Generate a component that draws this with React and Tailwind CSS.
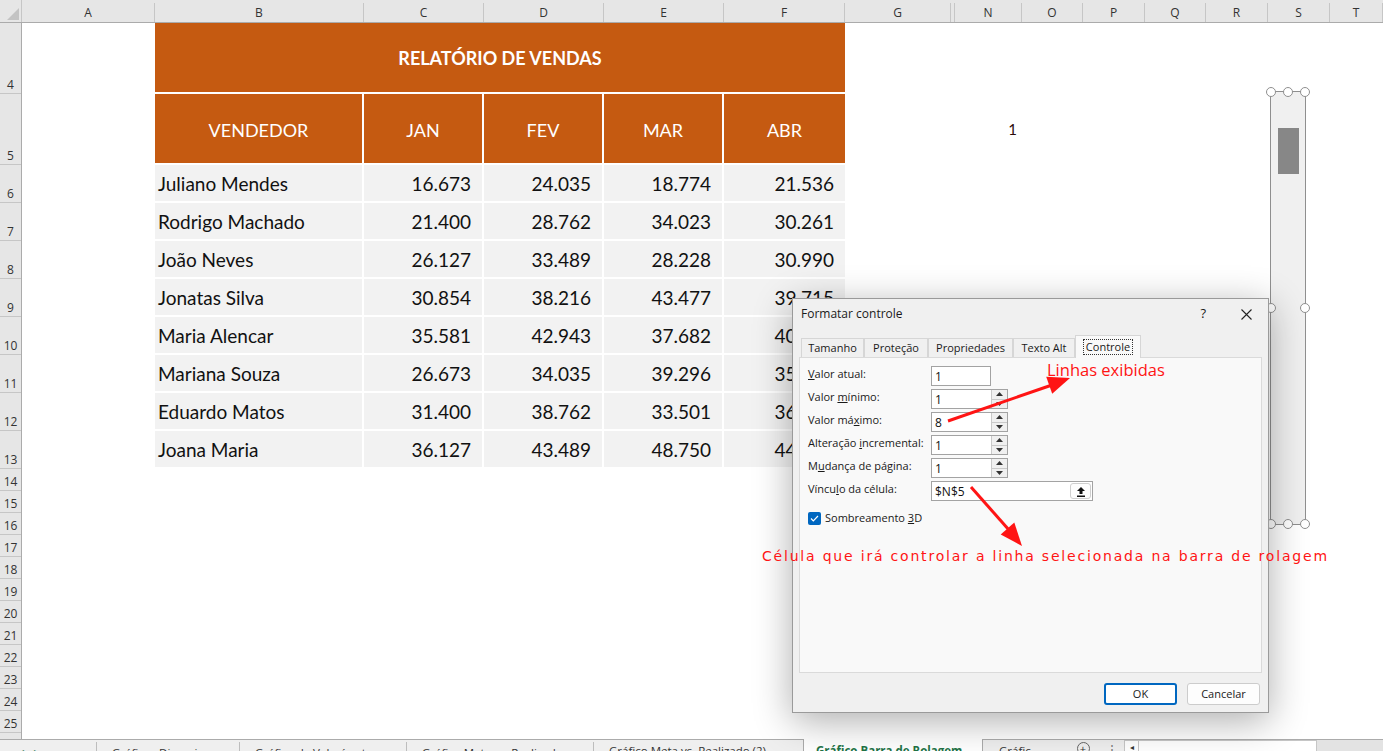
import React from "react";

const vendas = [
  ["Juliano Mendes", "16.673", "24.035", "18.774", "21.536"],
  ["Rodrigo Machado", "21.400", "28.762", "34.023", "30.261"],
  ["João Neves", "26.127", "33.489", "28.228", "30.990"],
  ["Jonatas Silva", "30.854", "38.216", "43.477", "39.715"],
  ["Maria Alencar", "35.581", "42.943", "37.682", "40.444"],
  ["Mariana Souza", "26.673", "34.035", "39.296", "35.534"],
  ["Eduardo Matos", "31.400", "38.762", "33.501", "36.263"],
  ["Joana Maria", "36.127", "43.489", "48.750", "44.988"],
];

const colunas = [
  ["A", "w-[133px]"],
  ["B", "w-[209px]"],
  ["C", "w-[120px]"],
  ["D", "w-[120px]"],
  ["E", "w-[120px]"],
  ["F", "w-[121px]"],
  ["G", "w-[106px]"],
  ["", "w-[4px]"],
  ["N", "w-[67px]"],
  ["O", "w-[61px]"],
  ["P", "w-[62px]"],
  ["Q", "w-[61px]"],
  ["R", "w-[62px]"],
  ["S", "w-[62px]"],
  ["T", "flex-1"],
];

const linhas = [
  [4, "h-[71px]"],
  [5, "h-[71px]"],
  ...[6, 7, 8, 9, 10, 11, 12, 13].map((n) => [n, "h-[38px]"]),
  ...[14, 15, 16, 17, 18, 19, 20, 21, 22, 23, 24, 25, 26].map((n) => [n, "h-[22px]"]),
];

const larguras = ["w-[209px]", "w-[120px]", "w-[120px]", "w-[120px]", "w-[121px]"];

function Spinner() {
  return (
    <div className="w-[16px] h-full flex flex-col border-l border-[#c9c9c9] bg-[#f0f0f0]">
      <div className="flex-1 flex items-center justify-center border-b border-[#c9c9c9]">
        <svg width="7" height="4" viewBox="0 0 7 4"><path d="M0 4L3.5 0L7 4Z" fill="#333" /></svg>
      </div>
      <div className="flex-1 flex items-center justify-center">
        <svg width="7" height="4" viewBox="0 0 7 4"><path d="M0 0L3.5 4L7 0Z" fill="#333" /></svg>
      </div>
    </div>
  );
}

function Campo({ valor, spinner, largo }) {
  return (
    <div
      className={`h-[20px] bg-white border border-[#a3a3a3] flex items-stretch ${
        largo ? "w-[162px]" : spinner ? "w-[77px]" : "w-[60px]"
      }`}
    >
      <span className="flex-1 pl-[3px] leading-[19px] text-[12px] text-[#111]">{valor}</span>
      {spinner && <Spinner />}
      {largo && (
        <div className="w-[21px] my-[1px] mr-[1px] rounded-[3px] border border-[#cfcfcf] bg-[#fdfdfd] flex items-center justify-center">
          <svg width="10" height="11" viewBox="0 0 10 11">
            <path d="M5 1L1 5H3.5V8H6.5V5H9Z" fill="#111" />
            <rect x="1" y="9.5" width="8" height="1.5" fill="#111" />
          </svg>
        </div>
      )}
    </div>
  );
}

function Alca({ pos }) {
  return (
    <div
      className={`absolute w-[10px] h-[10px] rounded-full bg-white border-[1.5px] border-[#8f8f8f] -translate-x-1/2 -translate-y-1/2 ${pos}`}
    />
  );
}

export default function App() {
  return (
    <div className="relative w-[1383px] h-[751px] overflow-hidden bg-white flex flex-col font-['Lato',sans-serif]">
      {/* cabeçalho de colunas */}
      <div className="h-[23px] shrink-0 flex items-end bg-[#e6e6e6] border-b border-[#ababab] font-['Open_Sans',sans-serif] text-[12px] text-[#333]">
        <div className="w-[22px] h-full relative border-r border-[#c6c6c6]">
          <svg className="absolute left-[7px] top-[8px]" width="12" height="12" viewBox="0 0 12 12">
            <path d="M12 0V12H0Z" fill="#c3c3c3" />
          </svg>
        </div>
        {colunas.map(([l, w], i) => (
          <div key={i} className={`${w} h-[19px] shrink-0 flex items-center justify-center border-r border-[#c6c6c6]`}>
            {l}
          </div>
        ))}
      </div>

      {/* corpo */}
      <div className="h-[716px] shrink-0 flex">
        <div className="w-[22px] shrink-0 bg-[#e6e6e6] border-r border-[#ababab] font-['Open_Sans',sans-serif] text-[12px] text-[#333]">
          {linhas.map(([n, h]) => (
            <div key={n} className={`${h} flex items-end justify-center pb-[1px] leading-[14px] border-b border-[#c6c6c6]`}>
              {n}
            </div>
          ))}
        </div>

        <div className="flex-1 flex flex-col">
          <div className="h-[71px] flex">
            <div className="w-[133px]" />
            <div className="w-[690px] bg-[#c55a11] border-b-2 border-white flex items-center justify-center pt-[2px] text-white font-bold text-[18px]">
              RELATÓRIO DE VENDAS
            </div>
          </div>
          <div className="h-[71px] flex">
            <div className="w-[133px]" />
            {["VENDEDOR", "JAN", "FEV", "MAR", "ABR"].map((t, i) => (
              <div
                key={t}
                className={`${larguras[i]} bg-[#c55a11] border-b-2 border-white flex items-center justify-center pt-[3px] text-white text-[18px] ${
                  i < 4 ? "border-r-2" : ""
                }`}
              >
                {t}
              </div>
            ))}
            <div className="w-[110px]" />
            <div className="w-[67px] flex items-center justify-end pr-[5px] text-[15px] text-[#2a0a0a]">1</div>
          </div>
          {vendas.map((linha) => (
            <div key={linha[0]} className="h-[38px] flex">
              <div className="w-[133px]" />
              {linha.map((v, i) => (
                <div
                  key={i}
                  className={`${larguras[i]} bg-[#f2f2f2] border-b-2 border-white flex items-center pt-[2px] text-[19px] text-[#111] ${
                    i < 4 ? "border-r-2" : ""
                  } ${i === 0 ? "pl-[3px]" : "justify-end pr-[11px]"}`}
                >
                  {v}
                </div>
              ))}
            </div>
          ))}
        </div>
      </div>

      {/* abas das planilhas */}
      <div className="h-[24px] shrink-0 flex border-t border-[#ababab] bg-[#efefef] font-['Open_Sans',sans-serif] text-[11.5px] text-[#333]">
        <div className="w-[97px] flex gap-[10px] pl-[18px] pt-[1px] text-[#217346] border-r border-[#bdbdbd] my-[2px]">
          <span>◂</span>
          <span>▸</span>
        </div>
        <div className="w-[143px] pl-[15px] pt-[2px] border-r border-[#bdbdbd] my-[2px]">Gráficos Dinamicos</div>
        <div className="w-[167px] pl-[15px] pt-[2px] border-r border-[#bdbdbd] my-[2px]">Gráfico de Velocímetro</div>
        <div className="w-[187px] pl-[15px] pt-[2px] border-r border-[#bdbdbd] my-[2px]">Gráfico Meta vs. Realizado</div>
        <div className="w-[209px] pl-[15px] pt-[2px]">Gráfico Meta vs. Realizado (2)</div>
        <div className="w-[180px] -mt-px bg-white pl-[12px] pt-[3px] font-bold text-[#217346] border-x border-[#ababab]">
          Gráfico Barra de Rolagem
        </div>
        <div className="w-[77px] pl-[16px] pt-[2px]">Gráfic</div>
        <div className="w-[46px] pt-[2px] flex items-start justify-center">
          <div className="w-[13px] h-[13px] rounded-full border border-[#666] flex items-center justify-center text-[11px] leading-none">+</div>
        </div>
        <div className="w-[18px] pt-[1px] text-[#777]">⋮</div>
        <div className="w-[193px] bg-white border border-[#c6c6c6] flex">
          <div className="w-[14px] border-r border-[#c6c6c6] text-[8px] text-center">◂</div>
        </div>
        <div className="flex-1 bg-[#e3e3e3]" />
      </div>

      {/* barra de rolagem (controle de formulário) */}
      <div className="absolute left-[1270px] top-[91px] w-[36px] h-[434px] bg-[#f0f0f0] border border-[#8f8f8f]">
        <div className="absolute left-[7px] top-[36px] w-[21px] h-[46px] bg-[#878787]" />
        <Alca pos="left-0 top-0" />
        <Alca pos="left-1/2 top-0" />
        <Alca pos="left-full top-0" />
        <Alca pos="left-0 top-1/2" />
        <Alca pos="left-full top-1/2" />
        <Alca pos="left-0 top-full" />
        <Alca pos="left-1/2 top-full" />
        <Alca pos="left-full top-full" />
      </div>

      {/* caixa de diálogo */}
      <div className="absolute left-[792px] top-[298px] w-[477px] h-[415px] bg-[#f0f0f0] border border-[#9a9a9a] shadow-[0_8px_36px_rgba(0,0,0,0.32)] flex flex-col font-['Open_Sans',sans-serif] text-[11px] text-[#1a1a1a]">
        <div className="h-[30px] flex items-center pl-[8px] pr-[16px]">
          <span className="flex-1 text-[12px]">Formatar controle</span>
          <span className="text-[13px] mr-[35px]">?</span>
          <svg width="11" height="11" viewBox="0 0 11 11">
            <path d="M0.5 0.5L10.5 10.5M10.5 0.5L0.5 10.5" stroke="#222" strokeWidth="1.1" />
          </svg>
        </div>
        <div className="h-[28px] flex items-end pl-[8px]">
          {[
            ["Tamanho", "w-[63px]"],
            ["Proteção", "w-[64px]"],
            ["Propriedades", "w-[85px]"],
            ["Texto Alt", "w-[62px]"],
          ].map(([t, w]) => (
            <div key={t} className={`${w} h-[19px] border border-b-0 border-[#d6d6d6] flex items-center justify-center`}>
              {t}
            </div>
          ))}
          <div className="w-[66px] h-[23px] -mb-px relative z-10 bg-[#f9f9f9] border border-b-0 border-[#d6d6d6] flex items-center justify-center">
            <span className="px-[2px] border border-dotted border-[#333] leading-[14px]">Controle</span>
          </div>
        </div>
        <div className="mx-[6px] h-[316px] bg-[#f9f9f9] border border-[#dadada] pl-[8px] pt-[8px]">
          <div className="grid grid-cols-[123px_auto] gap-y-[3px] items-start">
            <span className="leading-[16px]"><u>V</u>alor atual:</span>
            <Campo valor="1" />
            <span className="leading-[16px]">Valor <u>m</u>ínimo:</span>
            <Campo valor="1" spinner />
            <span className="leading-[16px]">Valor má<u>x</u>imo:</span>
            <Campo valor="8" spinner />
            <span className="leading-[16px]">Alteração <u>i</u>ncremental:</span>
            <Campo valor="1" spinner />
            <span className="leading-[16px]">M<u>u</u>dança de página:</span>
            <Campo valor="1" spinner />
            <span className="leading-[16px]">Víncu<u>l</u>o da célula:</span>
            <Campo valor="$N$5" largo />
          </div>
          <div className="mt-[9px] flex items-center gap-[4px]">
            <div className="w-[13px] h-[13px] rounded-[2px] bg-[#0067c0] flex items-center justify-center">
              <svg width="9" height="7" viewBox="0 0 9 7">
                <path d="M1 3.5L3.3 5.8L8 1" stroke="white" strokeWidth="1.2" fill="none" />
              </svg>
            </div>
            <span>Sombreamento <u>3</u>D</span>
          </div>
        </div>
        <div className="flex justify-end gap-[10px] pr-[8px] pt-[10px]">
          <button className="w-[73px] h-[22px] rounded-[3px] bg-white border-2 border-[#0067c0] text-[11px]">OK</button>
          <button className="w-[73px] h-[22px] rounded-[3px] bg-[#fdfdfd] border border-[#cccccc] text-[11px]">Cancelar</button>
        </div>
      </div>

      {/* anotações */}
      <svg className="absolute left-0 top-0 pointer-events-none" width="1383" height="751" viewBox="0 0 1383 751">
        <line x1="948" y1="421" x2="1052" y2="385" stroke="#ff1414" strokeWidth="3" />
        <polygon points="1070,378 1052.2,393.8 1046.2,376.8" fill="#ff1414" />
        <line x1="971" y1="487" x2="1009" y2="530" stroke="#ff1414" strokeWidth="3" />
        <polygon points="1022,546 1014.3,522.6 1000.7,534.4" fill="#ff1414" />
      </svg>
      <span className="absolute left-[1047px] top-[359px] text-[16.5px] leading-[22px] text-[#ff1414] font-['Open_Sans',sans-serif]">
        Linhas exibidas
      </span>
      <span className="absolute left-[762px] top-[547px] text-[14px] leading-[19px] tracking-[1.8px] text-[#ff1414] font-['DejaVu_Sans',sans-serif]">
        Célula que irá controlar a linha selecionada na barra de rolagem
      </span>
    </div>
  );
}
